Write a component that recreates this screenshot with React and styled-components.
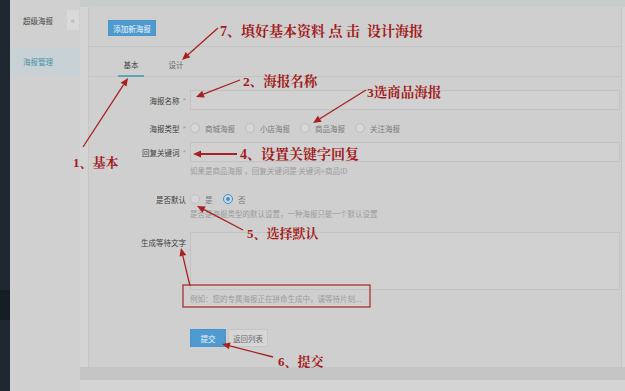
import React from 'react';
import styled, { createGlobalStyle } from 'styled-components';

const Global = createGlobalStyle`
  html, body { margin: 0; padding: 0; background: #cfcfcf; }
  body { font-family: "Noto Sans CJK SC", "Noto Sans", sans-serif; }
  * { box-sizing: border-box; }
`;

const Page = styled.div`
  position: relative;
  width: 625px;
  height: 391px;
  overflow: hidden;
  display: flex;
  background: #cfcfcf;
`;

const Rail = styled.div`
  width: 10px;
  flex-shrink: 0;
  background: #1f2830;
  display: flex;
  flex-direction: column;
  padding-top: 290px;
`;

const RailMark = styled.div`
  height: 30px;
  background: #161d24;
`;

const Sidebar = styled.nav`
  width: 70px;
  flex-shrink: 0;
  background: #d0d0d0;
  display: flex;
  flex-direction: column;
  padding-top: 10px;
`;

const SideHead = styled.div`
  height: 20px;
  display: flex;
  align-items: center;
  justify-content: space-between;
  padding-left: 13px;
  padding-right: 1px;
  font-size: 7.5px;
  color: #454545;
`;

const Collapse = styled.div`
  width: 12px;
  height: 20px;
  background: #d9d9d9;
  color: #a6a6a6;
  font-size: 9px;
  display: flex;
  align-items: center;
  justify-content: center;
`;

const NavItem = styled.div`
  margin-top: 17px;
  height: 29px;
  display: flex;
  align-items: center;
  padding-left: 13px;
  font-size: 7.5px;
  color: ${p => (p.$active ? '#4a90a8' : '#444')};
  background: ${p => (p.$active ? '#c8d2d6' : 'transparent')};
`;

const Main = styled.main`
  flex: 1;
  min-width: 0;
  display: flex;
  flex-direction: column;
  background: #d4d4d4;
`;

const TopStrip = styled.div`
  height: 7px;
  flex-shrink: 0;
  background: #c8cccd;
`;

const Card = styled.section`
  height: 360px;
  flex-shrink: 0;
  margin: 0 3px 0 8px;
  background: #cfcfcf;
  border-left: 1px solid #c6c6c6;
  border-right: 1px solid #c6c6c6;
  display: flex;
  flex-direction: column;
`;

const Footer = styled.div`
  height: 13px;
  flex-shrink: 0;
  background: #c5c5c5;
`;

const Header = styled.div`
  height: 40px;
  padding: 13px 0 0 19px;
  border-bottom: 1px solid #c3c3c3;
`;

const Button = styled.div`
  height: ${p => p.$h || 18}px;
  width: ${p => p.$w}px;
  display: flex;
  align-items: center;
  justify-content: center;
  font-size: 7.5px;
  color: ${p => (p.$primary ? '#eef3f8' : '#6a6a6a')};
  background: ${p => (p.$primary ? '#4f9bd0' : '#d6d6d6')};
  border: 1px solid ${p => (p.$primary ? '#4a95c9' : '#c6c6c6')};
`;

const Tabs = styled.div`
  height: 30px;
  display: flex;
  gap: 19px;
  padding-left: 29px;
  border-bottom: 1px solid #c3c3c3;
`;

const Tab = styled.div`
  width: 26px;
  display: flex;
  align-items: flex-end;
  justify-content: center;
  padding-bottom: 5px;
  font-size: 7.5px;
  color: ${p => (p.$active ? '#444' : '#666')};
  border-bottom: 2px solid ${p => (p.$active ? '#5aa5b8' : 'transparent')};
  margin-bottom: -1px;
`;

const Form = styled.div`
  padding-top: 13px;
  display: flex;
  flex-direction: column;
`;

const Row = styled.div`
  display: grid;
  grid-template-columns: 97px 1fr;
  column-gap: 4px;
  margin-top: ${p => p.$mt || 0}px;
  padding-right: 1px;
`;

const Label = styled.div`
  height: ${p => p.$h}px;
  display: flex;
  align-items: center;
  justify-content: flex-end;
  font-size: 7.5px;
  color: #3d3d3d;
  white-space: nowrap;
`;

const Star = styled.span`
  color: #9a9a9a;
  margin-left: 3px;
`;

const Field = styled.div`
  display: flex;
  flex-direction: column;
`;

const Input = styled.div`
  height: ${p => p.$h || 20}px;
  border: 1px solid #c3c3c3;
  background: #d1d1d1;
`;

const Hint = styled.div`
  margin-top: ${p => p.$mt || 0}px;
  height: 12px;
  line-height: 12px;
  font-size: 7.5px;
  color: #9b9b9b;
  white-space: pre;
`;

const RadioGroup = styled.div`
  height: ${p => p.$h}px;
  display: flex;
  align-items: center;
`;

const RadioOption = styled.div`
  width: ${p => p.$w}px;
  display: flex;
  align-items: center;
  gap: 5px;
  font-size: 7.5px;
  color: #7a7a7a;
`;

const Circle = styled.span`
  width: 10px;
  height: 10px;
  border-radius: 50%;
  flex-shrink: 0;
  background: #d6d6d6;
  border: 1px solid ${p => (p.$on ? '#3d8fd0' : '#bfbfbf')};
  display: flex;
  align-items: center;
  justify-content: center;
  &::after {
    content: '';
    width: 4px;
    height: 4px;
    border-radius: 50%;
    background: ${p => (p.$on ? '#3d8fd0' : 'transparent')};
  }
`;

const Actions = styled.div`
  display: flex;
  gap: 2px;
`;

const Overlay = styled.div`
  position: absolute;
  inset: 0;
  pointer-events: none;
`;

const ArrowLayer = styled.svg`
  position: absolute;
  left: 0;
  top: 0;
`;

const Note = styled.span`
  position: absolute;
  left: ${p => p.$x}px;
  top: ${p => p.$y - p.$size / 2}px;
  font-family: "Liberation Serif", "Noto Serif CJK SC", "Noto Sans CJK SC", serif;
  font-weight: 700;
  font-size: ${p => p.$size}px;
  line-height: 1;
  color: #a31b1b;
  white-space: pre;
`;

const RED = '#a82020';

function Arrow({ x1, y1, x2, y2, w = 1.3 }) {
  const dx = x2 - x1;
  const dy = y2 - y1;
  const len = Math.hypot(dx, dy);
  const ux = dx / len;
  const uy = dy / len;
  const hl = 8;
  const hw = 3.5;
  const bx = x2 - ux * hl;
  const by = y2 - uy * hl;
  const pts = [
    [x2, y2],
    [bx - uy * hw, by + ux * hw],
    [bx + uy * hw, by - ux * hw],
  ]
    .map(p => p.join(','))
    .join(' ');
  return (
    <g>
      <line x1={x1} y1={y1} x2={bx} y2={by} stroke={RED} strokeWidth={w} />
      <polygon points={pts} fill={RED} />
    </g>
  );
}

const arrows = [
  { x1: 218, y1: 28, x2: 182, y2: 60 },
  { x1: 240, y1: 80, x2: 196, y2: 97 },
  { x1: 366, y1: 90, x2: 313, y2: 123 },
  { x1: 237, y1: 154, x2: 193, y2: 154, w: 1.8 },
  { x1: 243, y1: 230, x2: 197, y2: 206 },
  { x1: 190, y1: 286, x2: 181, y2: 248 },
  { x1: 273, y1: 357, x2: 222, y2: 344 },
  { x1: 83, y1: 147, x2: 128, y2: 78 },
];

const notes = [
  { x: 220, y: 32, size: 14, text: '7、填好基本资料 点 击  设计海报' },
  { x: 243, y: 82, size: 13.5, text: '2、海报名称' },
  { x: 367, y: 93, size: 13.5, text: '3选商品海报' },
  { x: 240, y: 155, size: 14, text: '4、设置关键字回复' },
  { x: 247, y: 233, size: 13, text: '5、选择默认' },
  { x: 278, y: 361, size: 13, text: '6、提交' },
  { x: 73, y: 162, size: 13, text: '1、基本' },
];

export default function App() {
  return (
    <>
      <Global />
      <Page>
        <Rail>
          <RailMark />
        </Rail>
        <Sidebar>
          <SideHead>
            <span>超级海报</span>
            <Collapse>«</Collapse>
          </SideHead>
          <NavItem $active>海报管理</NavItem>
        </Sidebar>
        <Main>
          <TopStrip />
          <Card>
            <Header>
              <Button $primary $w={48} $h={16}>添加新海报</Button>
            </Header>
            <Tabs>
              <Tab $active>基本</Tab>
              <Tab>设计</Tab>
            </Tabs>
            <Form>
              <Row>
                <Label $h={20}>海报名称<Star>*</Star></Label>
                <Field>
                  <Input />
                </Field>
              </Row>
              <Row $mt={8}>
                <Label $h={20}>海报类型<Star>*</Star></Label>
                <RadioGroup $h={20}>
                  {['商城海报', '小店海报', '商品海报', '关注海报'].map(t => (
                    <RadioOption key={t} $w={55}>
                      <Circle />
                      {t}
                    </RadioOption>
                  ))}
                </RadioGroup>
              </Row>
              <Row $mt={4}>
                <Label $h={20}>回复关键词<Star>*</Star></Label>
                <Field>
                  <Input />
                  <Hint $mt={3}>如果是商品海报 ，回复关键词是 关键词+商品ID</Hint>
                </Field>
              </Row>
              <Row $mt={13}>
                <Label $h={18}>是否默认</Label>
                <Field>
                  <RadioGroup $h={18}>
                    <RadioOption $w={33}>
                      <Circle />
                      是
                    </RadioOption>
                    <RadioOption $w={33}>
                      <Circle $on />
                      否
                    </RadioOption>
                  </RadioGroup>
                  <Hint>是否是海报类型的默认设置，一种海报只能一个默认设置</Hint>
                </Field>
              </Row>
              <Row $mt={12}>
                <Label $h={20}>生成等待文字</Label>
                <Field>
                  <Input $h={58} />
                  <Hint $mt={3}>例如：您的专属海报正在拼命生成中，请等待片刻...</Hint>
                </Field>
              </Row>
              <Row $mt={24}>
                <span />
                <Actions>
                  <Button $primary $w={36}>提交</Button>
                  <Button $w={40}>返回列表</Button>
                </Actions>
              </Row>
            </Form>
          </Card>
          <Footer />
        </Main>
        <Overlay>
          <ArrowLayer width="625" height="391" viewBox="0 0 625 391">
            {arrows.map((a, i) => (
              <Arrow key={i} {...a} />
            ))}
            <rect x="183" y="285" width="187" height="22" fill="none" stroke="#b03030" strokeWidth="1.3" />
          </ArrowLayer>
          {notes.map((n, i) => (
            <Note key={i} $x={n.x} $y={n.y} $size={n.size}>
              {n.text}
            </Note>
          ))}
        </Overlay>
      </Page>
    </>
  );
}
